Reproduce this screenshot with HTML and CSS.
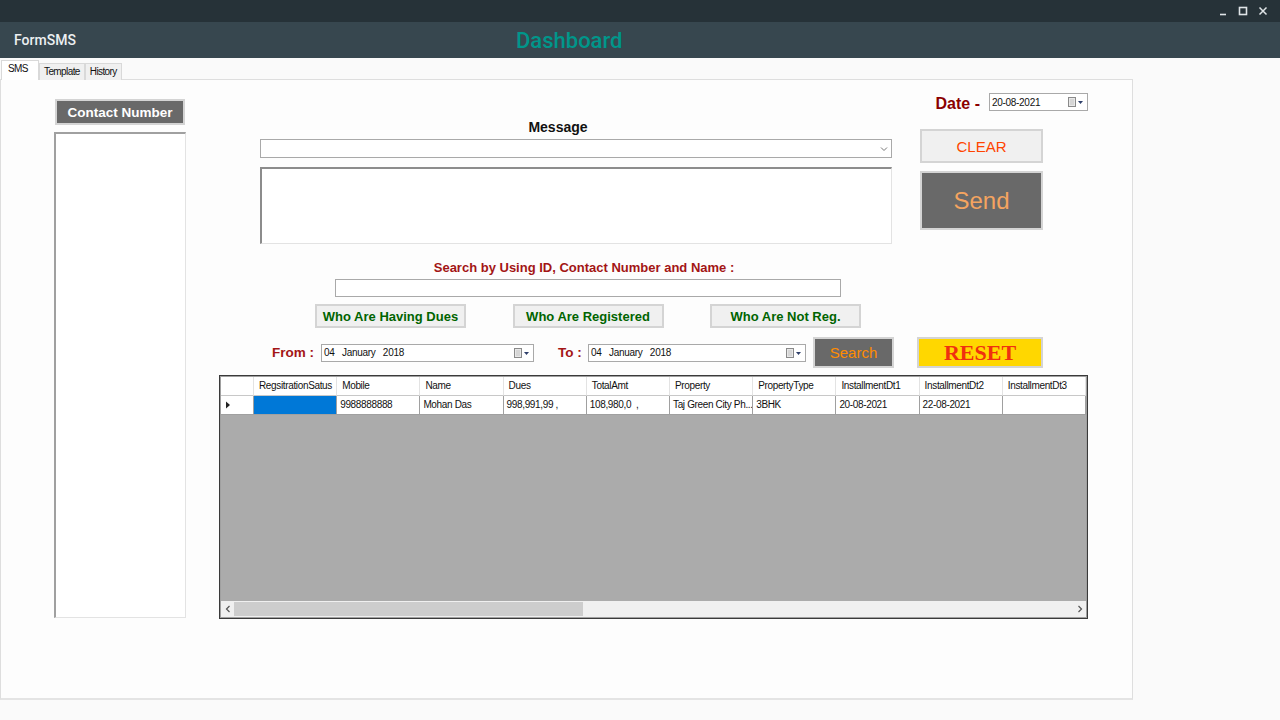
FILE: index.html
```html
<!DOCTYPE html>
<html lang="en">
<head>
  <meta charset="UTF-8">
  <title>FormSMS</title>
  <meta name="viewport" content="width=device-width, initial-scale=1.0">
  <link rel="stylesheet" href="styles.css">
</head>
<body>

  <div class="titlebar">
    <span class="winbtn">
      <svg width="10" height="10" viewBox="0 0 10 10"><path d="M2 8.5h6" stroke="#dfe4e7" stroke-width="1.6"/></svg>
    </span>
    <span class="winbtn">
      <svg width="10" height="10" viewBox="0 0 10 10"><rect x="1.5" y="1.5" width="7" height="7" fill="none" stroke="#dfe4e7" stroke-width="1.6"/></svg>
    </span>
    <span class="winbtn">
      <svg width="10" height="10" viewBox="0 0 10 10"><path d="M1.5 1.5l7 7M8.5 1.5l-7 7" stroke="#dfe4e7" stroke-width="1.5"/></svg>
    </span>
  </div>

  <header class="appbar">
    <span class="app-name">FormSMS</span>
    <span class="app-title">Dashboard</span>
  </header>

  <div class="tabs">
    <div class="tab active">SMS</div>
    <div class="tab">Template</div>
    <div class="tab">History</div>
  </div>

  <div class="panel">
    <aside class="contacts">
      <button class="btn-dark contact-btn">Contact Number</button>
      <div class="listbox"></div>
    </aside>

    <main class="main">
      <div class="top">
        <div class="msg">
          <div class="msg-label">Message</div>
          <div class="combo">
            <svg width="8" height="6" viewBox="0 0 8 6"><path d="M1 1.5l3 3 3-3" fill="none" stroke="#777" stroke-width="1"/></svg>
          </div>
          <div class="textarea"></div>
        </div>
        <div class="side">
          <div class="date-row">
            <span class="date-label">Date -</span>
            <div class="picker date-picker">
              <span>20-08-2021</span>
              <svg class="cal" width="18" height="12" viewBox="0 0 18 12"><rect x="1.5" y="1.5" width="7" height="9" fill="#e8e8e8" stroke="#8a8a8a"/><path d="M3 4h4M3 6h4M3 8h4" stroke="#bbb" stroke-width="0.8"/><path d="M11 5h5l-2.5 3z" fill="#2e3f6a"/></svg>
            </div>
          </div>
          <button class="btn-light clear-btn">CLEAR</button>
          <button class="btn-dark send-btn">Send</button>
        </div>
      </div>

      <div class="search">
        <div class="search-label">Search by Using ID, Contact Number and Name :</div>
        <div class="search-input"></div>
        <div class="filters">
          <button class="btn-light filter-btn">Who Are Having Dues</button>
          <button class="btn-light filter-btn">Who Are Registered</button>
          <button class="btn-light filter-btn">Who Are Not Reg.</button>
        </div>
      </div>

      <div class="range">
        <span class="range-label from-label">From :</span>
        <div class="picker from-picker">
          <span>04&nbsp;&nbsp;&nbsp;January&nbsp;&nbsp;&nbsp;2018</span>
          <svg class="cal" width="18" height="12" viewBox="0 0 18 12"><rect x="1.5" y="1.5" width="7" height="9" fill="#e8e8e8" stroke="#8a8a8a"/><path d="M3 4h4M3 6h4M3 8h4" stroke="#bbb" stroke-width="0.8"/><path d="M11 5h5l-2.5 3z" fill="#2e3f6a"/></svg>
        </div>
        <span class="range-label to-label">To :</span>
        <div class="picker to-picker">
          <span>04&nbsp;&nbsp;&nbsp;January&nbsp;&nbsp;&nbsp;2018</span>
          <svg class="cal" width="18" height="12" viewBox="0 0 18 12"><rect x="1.5" y="1.5" width="7" height="9" fill="#e8e8e8" stroke="#8a8a8a"/><path d="M3 4h4M3 6h4M3 8h4" stroke="#bbb" stroke-width="0.8"/><path d="M11 5h5l-2.5 3z" fill="#2e3f6a"/></svg>
        </div>
        <button class="btn-dark search-btn">Search</button>
        <button class="reset-btn">RESET</button>
      </div>

      <div class="grid">
        <div class="grid-head">
          <div class="cell"></div>
          <div class="cell">RegsitrationSatus</div>
          <div class="cell">Mobile</div>
          <div class="cell">Name</div>
          <div class="cell">Dues</div>
          <div class="cell">TotalAmt</div>
          <div class="cell">Property</div>
          <div class="cell">PropertyType</div>
          <div class="cell">InstallmentDt1</div>
          <div class="cell">InstallmentDt2</div>
          <div class="cell">InstallmentDt3</div>
        </div>
        <div class="grid-row">
          <div class="cell row-head">
            <svg width="6" height="8" viewBox="0 0 6 8"><path d="M1 0.5l4 3.5-4 3.5z" fill="#222"/></svg>
          </div>
          <div class="cell selected"></div>
          <div class="cell">9988888888</div>
          <div class="cell">Mohan Das</div>
          <div class="cell">998,991,99 ,</div>
          <div class="cell">108,980,0&nbsp;&nbsp;,</div>
          <div class="cell">Taj Green City Ph...</div>
          <div class="cell">3BHK</div>
          <div class="cell">20-08-2021</div>
          <div class="cell">22-08-2021</div>
          <div class="cell"></div>
        </div>
        <div class="grid-empty"></div>
        <div class="hscroll">
          <span class="arrow">
            <svg width="6" height="8" viewBox="0 0 6 8"><path d="M4.5 1l-3 3 3 3" fill="none" stroke="#555" stroke-width="1.2"/></svg>
          </span>
          <span class="thumb"></span>
          <span class="track"></span>
          <span class="arrow">
            <svg width="6" height="8" viewBox="0 0 6 8"><path d="M1.5 1l3 3-3 3" fill="none" stroke="#555" stroke-width="1.2"/></svg>
          </span>
        </div>
      </div>
    </main>
  </div>

</body>
</html>
```

FILE: styles.css
```css
* {
  box-sizing: border-box;
}

body {
  margin: 0;
  width: 1280px;
  height: 720px;
  overflow: hidden;
  background: #fafafa;
  font-family: "Liberation Sans", Arial, sans-serif;
}

button {
  font-family: "Liberation Sans", Arial, sans-serif;
  padding: 0;
  cursor: pointer;
}

/* window chrome */
.titlebar {
  height: 22px;
  background: #263238;
  display: flex;
  justify-content: flex-end;
  align-items: center;
  padding-right: 7px;
}

.winbtn {
  width: 20px;
  height: 22px;
  display: flex;
  align-items: center;
  justify-content: center;
}

.appbar {
  height: 36px;
  background: #37474f;
  display: flex;
  align-items: center;
  padding-left: 14px;
}

.app-name {
  width: 502px;
  font-family: Roboto, sans-serif;
  font-size: 14px;
  font-weight: 500;
  color: #eceff1;
}

.app-title {
  font-family: Roboto, sans-serif;
  font-size: 22px;
  font-weight: 500;
  color: #00968a;
}

/* tabs */
.tabs {
  height: 21px;
  display: flex;
  align-items: flex-end;
  padding-left: 1px;
}

.tab {
  height: 17px;
  padding: 0 4px;
  font-size: 10px;
  letter-spacing: -0.6px;
  line-height: 16px;
  color: #111;
  background: #f0f0f0;
  border: 1px solid #d9d9d9;
  border-bottom: none;
  margin-bottom: -1px;
}

.tab.active {
  width: 38px;
  height: 20px;
  padding-left: 6px;
  line-height: 15px;
  background: #fff;
  position: relative;
  z-index: 1;
}

/* tab page */
.panel {
  width: 1133px;
  height: 621px;
  background: #fdfdfd;
  border: 1px solid #dedede;
  border-bottom: 2px solid #e4e4e4;
  display: flex;
  padding: 13px 0 0 53px;
}

.contacts {
  width: 132px;
  margin-top: 6px;
  display: flex;
  flex-direction: column;
  align-items: center;
}

.btn-dark {
  background: #696969;
  border: 2px solid #d4d4d4;
  color: #fff;
}

.btn-light {
  background: #f0f0f0;
  border: 2px solid #d4d4d4;
}

.contact-btn {
  width: 130px;
  height: 26px;
  font-size: 13.5px;
  font-weight: bold;
}

.listbox {
  width: 132px;
  height: 486px;
  margin-top: 7px;
  background: #fff;
  border-top: 2px solid #a0a0a0;
  border-left: 2px solid #a0a0a0;
  border-right: 1px solid #e3e3e3;
  border-bottom: 1px solid #e3e3e3;
}

.main {
  width: 869px;
  margin-left: 33px;
}

/* message area */
.top {
  display: flex;
}

.msg {
  width: 632px;
  margin-left: 41px;
  display: flex;
  flex-direction: column;
}

.msg-label {
  margin-top: 26px;
  height: 16px;
  line-height: 16px;
  text-align: center;
  padding-right: 36px;
  font-size: 14px;
  font-weight: bold;
  color: #111;
}

.combo {
  margin-top: 4px;
  height: 19px;
  background: #fff;
  border: 1px solid #a9a9a9;
  display: flex;
  align-items: center;
  justify-content: flex-end;
  padding-right: 3px;
}

.textarea {
  margin-top: 9px;
  height: 77px;
  background: #fff;
  border-top: 2px solid #8c8c8c;
  border-left: 2px solid #8c8c8c;
  border-right: 1px solid #e3e3e3;
  border-bottom: 1px solid #e3e3e3;
}

.side {
  width: 168px;
  margin-left: 28px;
  display: flex;
  flex-direction: column;
}

.date-row {
  height: 18px;
  display: flex;
  align-items: center;
  justify-content: flex-end;
}

.date-label {
  font-size: 16px;
  font-weight: bold;
  color: #8b0000;
  margin-right: 9px;
  margin-top: 3px;
}

.picker {
  height: 18px;
  background: #fff;
  border: 1px solid #a9a9a9;
  display: flex;
  align-items: center;
  justify-content: space-between;
  padding-left: 2px;
  font-size: 10px;
  letter-spacing: -0.3px;
  color: #111;
}

.cal {
  margin-right: 2px;
}

.date-picker {
  width: 99px;
}

.clear-btn {
  margin-top: 18px;
  width: 123px;
  height: 34px;
  font-size: 15px;
  color: #ff4500;
}

.send-btn {
  margin-top: 8px;
  width: 123px;
  height: 59px;
  font-size: 24px;
  color: #f4a460;
}

/* search */
.search {
  width: 546px;
  margin-left: 96px;
  display: flex;
  flex-direction: column;
  align-items: center;
}

.search-label {
  margin-top: 16px;
  height: 16px;
  line-height: 16px;
  padding-right: 8px;
  font-size: 13px;
  font-weight: bold;
  color: #a31515;
}

.search-input {
  margin-top: 3px;
  width: 506px;
  height: 18px;
  background: #fff;
  border: 1px solid #a9a9a9;
}

.filters {
  margin-top: 7px;
  width: 100%;
  display: flex;
  justify-content: space-between;
}

.filter-btn {
  width: 151px;
  height: 24px;
  font-size: 13px;
  font-weight: bold;
  color: #006400;
}

/* date range */
.range {
  margin-top: 9px;
  height: 31px;
  display: flex;
  align-items: center;
  padding-left: 53px;
}

.range-label {
  font-size: 13.5px;
  font-weight: bold;
  color: #a31515;
}

.from-label {
  width: 49px;
}

.to-label {
  width: 30px;
  margin-left: 24px;
}

.from-picker {
  width: 213px;
}

.to-picker {
  width: 218px;
}

.search-btn {
  margin-left: 7px;
  width: 81px;
  height: 31px;
  font-size: 15px;
  color: #ff8c00;
}

.reset-btn {
  margin-left: 23px;
  width: 126px;
  height: 31px;
  background: #ffd700;
  border: 2px solid #d4d4d4;
  font-family: "Liberation Serif", "Times New Roman", serif;
  font-size: 22px;
  font-weight: bold;
  color: #f0300f;
}

/* data grid */
.grid {
  margin-top: 7px;
  width: 869px;
  height: 244px;
  border: 1px solid #3a3a3a;
  padding: 1px;
  background: #a0a0a0;
  display: flex;
  flex-direction: column;
}

.grid-head,
.grid-row {
  display: grid;
  grid-template-columns: 33px repeat(10, 1fr);
  background: #fff;
  font-size: 10px;
  letter-spacing: -0.35px;
  color: #111;
}

.grid-head {
  height: 19px;
}

.grid-head .cell {
  border-right: 1px solid #e3e3e3;
  border-bottom: 1px solid #c8c8c8;
  padding-left: 5px;
  line-height: 18px;
}

.grid-row {
  height: 19px;
}

.grid-row .cell {
  border-right: 1px solid #a0a0a0;
  border-bottom: 1px solid #a0a0a0;
  padding-left: 3px;
  line-height: 18px;
  white-space: nowrap;
  overflow: hidden;
}

.grid-row .row-head {
  display: flex;
  align-items: center;
  padding-left: 4px;
}

.grid-row .selected {
  background: #0078d7;
}

.grid-empty {
  flex: 1;
  background: #ababab;
}

.hscroll {
  height: 16px;
  background: #f0f0f0;
  display: flex;
  align-items: stretch;
}

.arrow {
  width: 13px;
  display: flex;
  align-items: center;
  justify-content: center;
}

.thumb {
  width: 349px;
  background: #cdcdcd;
  margin: 1px 0;
}

.track {
  flex: 1;
}
```
